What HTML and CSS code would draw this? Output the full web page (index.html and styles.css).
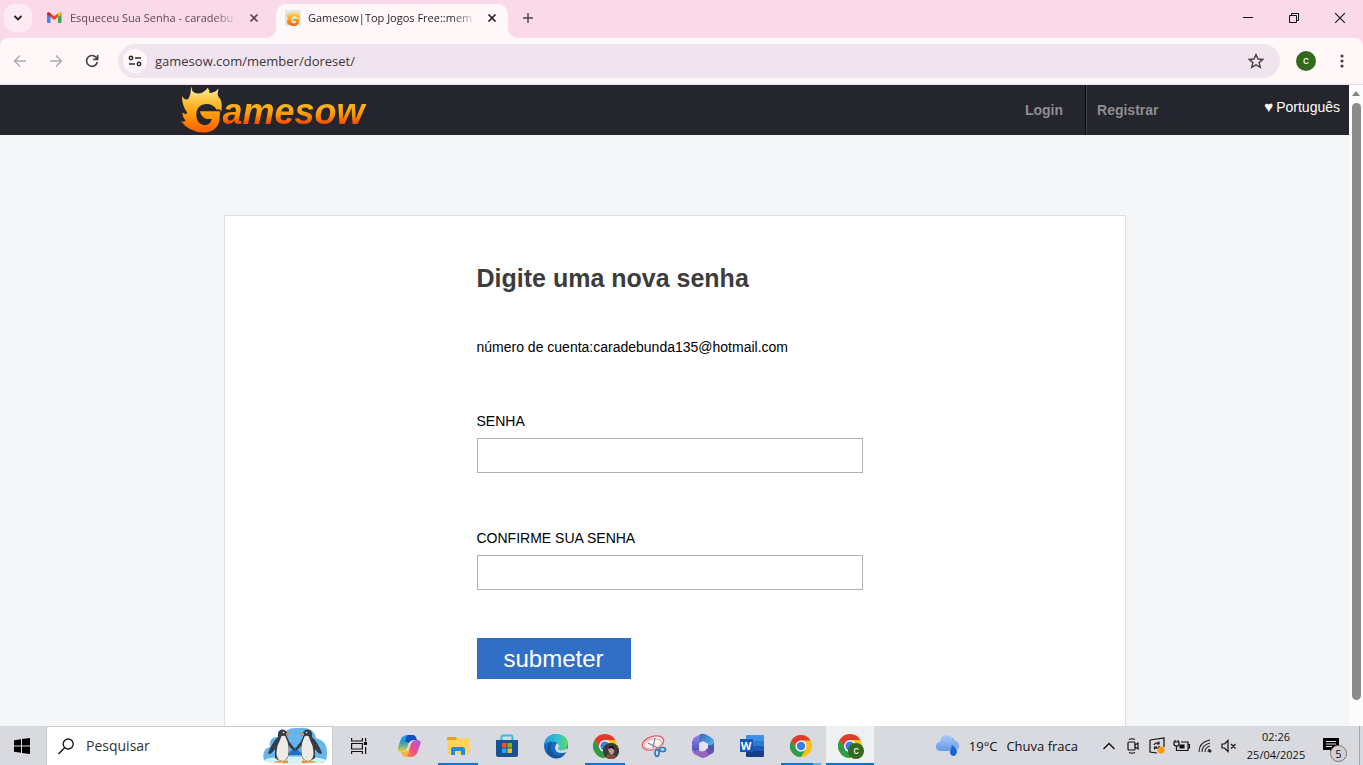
FILE: index.html
```html
<!DOCTYPE html>
<html lang="pt-BR">
<head>
<meta charset="utf-8">
<title>Gamesow|Top Jogos Free::member</title>
<link rel="stylesheet" href="styles.css">
</head>
<body>
<svg class="defs" aria-hidden="true">
  <defs>
    <linearGradient id="flame" x1="0" y1="0" x2="0" y2="1"><stop offset="0" stop-color="#fff0b0"/><stop offset=".3" stop-color="#fdc544"/><stop offset=".6" stop-color="#ff9d08"/><stop offset="1" stop-color="#ff5a00"/></linearGradient>
    <symbol id="g-flame" viewBox="30 14 130 144">
      <path fill="url(#flame)" d="M63 17L68 32Q79 43 97 37Q110 31 114 22Q121 31 118 38Q134 38 147 24Q141 42 147 50Q160 60 155 94Q150 84 141 88Q130 70 108 71Q80 74 79 102Q80 133 104 135Q122 134 126 116L110 116Q95 113 90 93L151 93L149 122Q140 157 100 157Q55 155 33 122Q43 127 47 121Q38 113 37 96Q45 105 52 98Q35 73 36 46Q43 61 55 56Q64 41 63 17Z"/>
    </symbol>
    <symbol id="chrome" viewBox="0 0 26 26">
      <circle cx="13" cy="13" r="12" fill="#fbc116"/>
      <path fill="#e23b2e" d="M2.6 7A12 12 0 0 1 23.4 7H13L8 16Z"/>
      <path fill="#2c9d4c" d="M2.6 7A12 12 0 0 0 13 25L18.2 16L13 19L8 16Z"/>
      <circle cx="13" cy="13" r="6" fill="#fff"/><circle cx="13" cy="13" r="4.6" fill="#3b7ded"/>
    </symbol>
    <symbol id="close" viewBox="0 0 10 10"><path d="M1.5 1.5l7 7m0-7l-7 7" stroke="currentColor" stroke-width="1.7"/></symbol>
  </defs>
</svg>

<header class="tabs">
  <button class="tab-search" aria-label="Pesquisar guias"><svg width="10" height="8" viewBox="0 0 10 8"><path d="M1.5 2L5 5.5L8.5 2" fill="none" stroke="#222" stroke-width="1.8"/></svg></button>
  <div class="tab">
    <svg width="16" height="16" viewBox="0 0 16 16"><path fill="#4285f4" d="M0 4h3.5v9H1q-1 0-1-1z"/><path fill="#34a853" d="M11 4h3.500v8q0 1-1 1H11z"/><path fill="#ea4335" d="M0 4Q0 1.500 3 3L7.200 6.200L11.500 3Q14.500 1.500 14.500 4L7.200 10z"/><path fill="#fbbc04" d="M11 3.300Q14.500 1.500 14.500 4.500L11 7.300z"/><path fill="#c5221f" d="M0 4Q0 2 2 2.400L3.500 3.300V7z"/></svg>
    <span class="tab-title">Esqueceu Sua Senha - caradebu</span>
    <button class="tab-close" aria-label="Fechar"><svg width="10" height="10"><use href="#close"/></svg></button>
  </div>
  <div class="tab active">
    <span class="favicon"><svg width="16" height="16"><use href="#g-flame"/></svg></span>
    <span class="tab-title">Gamesow|Top Jogos Free::mem</span>
    <button class="tab-close" aria-label="Fechar"><svg width="10" height="10"><use href="#close"/></svg></button>
  </div>
  <button class="new-tab" aria-label="Nova guia"><svg width="12" height="12" viewBox="0 0 12 12"><path d="M6 1v10M1 6h10" stroke="#54434e" stroke-width="1.500"/></svg></button>
  <div class="window-controls">
    <button aria-label="Minimizar"><svg width="10" height="10" viewBox="0 0 10 10"><path d="M0 4.500h10" stroke="#111"/></svg></button>
    <button aria-label="Restaurar"><svg width="10" height="10" viewBox="0 0 10 10"><path d="M.5 2.500h7v7h-7zM2.500 2.500v-2h7v7h-2" fill="none" stroke="#111"/></svg></button>
    <button aria-label="Fechar janela"><svg width="10" height="10" viewBox="0 0 10 10"><path d="M0 0l10 10M10 0L0 10" stroke="#111" stroke-width="1.100"/></svg></button>
  </div>
</header>

<nav class="toolbar" aria-label="Navegação">
  <div class="nav-buttons">
    <button aria-label="Voltar"><svg width="14" height="14" viewBox="0 0 14 14" fill="none" stroke="#b3a9af" stroke-width="1.500"><path d="M13 7H2M7 1.500L1.500 7L7 12.500"/></svg></button>
    <button aria-label="Avançar"><svg width="14" height="14" viewBox="0 0 14 14" fill="none" stroke="#b3a9af" stroke-width="1.500"><path d="M1 7h11M7 1.500L12.500 7L7 12.500"/></svg></button>
    <button aria-label="Recarregar"><svg width="14" height="14" viewBox="0 0 14 14" fill="none" stroke="#4c3945" stroke-width="1.600"><path d="M12.300 8A5.400 5.400 0 1 1 11 3.300L12.500 5M12.600 1v4.400H8.200"/></svg></button>
  </div>
  <div class="omnibox">
    <button class="site-info" aria-label="Informações do site"><svg width="14" height="12" viewBox="0 0 14 12" fill="none" stroke="#30272d" stroke-width="1.500"><circle cx="3" cy="3" r="1.700"/><path d="M7 3h6M1 9h6"/><circle cx="11" cy="9" r="1.700"/></svg></button>
    <input class="url" type="text" aria-label="Endereço" value="gamesow.com/member/doreset/">
    <button class="star" aria-label="Favoritos"><svg width="16" height="16" viewBox="0 0 16 16"><path d="M8 1.500L10 6l4.800.4L11.100 9.600l1.200 4.700L8 11.800l-4.300 2.500l1.200-4.700L1.200 6.400L6 6z" fill="none" stroke="#4c3d47" stroke-width="1.400"/></svg></button>
  </div>
  <button class="avatar" aria-label="Perfil">c</button>
  <button class="more" aria-label="Mais"><svg width="4" height="14" viewBox="0 0 4 14" fill="#4c3945"><circle cx="2" cy="2" r="1.600"/><circle cx="2" cy="7" r="1.600"/><circle cx="2" cy="12" r="1.600"/></svg></button>
</nav>

<div class="viewport">
  <div class="page">
    <header class="site-header">
      <div class="site-bar">
        <a class="logo" href="#" aria-label="Gamesow"><svg width="43" height="48"><use href="#g-flame"/></svg><span class="logo-text">amesow</span></a>
        <a class="site-link" href="#">Login</a>
        <a class="site-link register" href="#">Registrar</a>
      </div>
      <button class="language"><span class="heart">♥</span> Português</button>
    </header>
    <main class="card">
      <form class="reset">
        <h1>Digite uma nova senha</h1>
        <p class="account">número de cuenta:caradebunda135@hotmail.com</p>
        <div class="field"><label for="senha">SENHA</label><input id="senha" type="password"></div>
        <div class="field"><label for="confirme">CONFIRME SUA SENHA</label><input id="confirme" type="password"></div>
        <button class="submit" type="submit">submeter</button>
      </form>
    </main>
  </div>
  <div class="scrollbar"><svg width="8" height="5" viewBox="0 0 8 5"><path d="M4 0l4 5H0z" fill="#858585"/></svg><div class="thumb"></div></div>
</div>

<footer class="taskbar">
  <button class="start" aria-label="Iniciar"><svg width="16" height="16" viewBox="0 0 16 16"><path d="M0 2.200L7 1.200V7.500H0zM8 1L16 0V7.500H8zM0 8.500H7V14.800L0 13.800zM8 8.500h8V16L8 15z"/></svg></button>
  <div class="search">
    <svg width="16" height="17" viewBox="0 0 16 17" fill="none" stroke="#111" stroke-width="1.300"><circle cx="10.200" cy="6" r="5"/><path d="M6.700 9.800L.5 16"/></svg>
    <input type="text" aria-label="Pesquisar" placeholder="Pesquisar">
    <svg width="66" height="38" viewBox="0 0 66 38">
      <path d="M2 34Q-1 22 8 20Q6 8 20 10Q23 0 36 1Q52-1 54 11Q66 14 65 27Q65 35 60 36z" fill="#68b5ec"/>
      <path d="M25 28L33 20L41 28z" fill="#236fc8"/>
      <ellipse cx="33" cy="33.500" rx="31" ry="4" fill="#d8f1f4"/>
      <g id="penguin"><path d="M25.500 7Q24 2 20 2.500Q15 3 16 10Q11 14 6 26Q8 29 13 22L13 31Q19 36 25 32Q28 26 27 19Q30 23 33 24.500Q33 21 30 18Q27 15 25 10z" fill="#343b49"/><path d="M19.500 9Q24 8 24 11Q28 19 26 29Q24 34 19 34Q14 32 14.500 25Q15 18 18 13z" fill="#eeeae6"/><path d="M24 6l5 .5-5 2.500z" fill="#e9824a"/><path d="M12 35l7-2 2 2.500h-9zM21 33.500h5v2.500h-6z" fill="#e89238"/><circle cx="21.500" cy="5.500" r=".8" fill="#fff"/></g>
      <use href="#penguin" transform="translate(66 0) scale(-1 1)"/>
    </svg>
  </div>
  <button class="task-view" aria-label="Visão de tarefas"><svg width="16" height="16" viewBox="0 0 16 16" fill="none" stroke="#111" stroke-width="1.200"><path d="M.6 0V3H11.400V0M.6 5.500H11.400V11H.6zM.6 16V13.500H11.400V16M14.600 0V3.500M14.600 9V16"/><path fill="#111" d="M13.500 4.500h2v2h-2z"/></svg></button>
  <div class="apps">
    <button class="app" aria-label="Copilot"><svg width="26" height="24" viewBox="0 0 26 24">
      <defs><linearGradient id="cp1" x1="0" y1="0" x2="0" y2="1"><stop offset="0" stop-color="#15a5f1"/><stop offset=".4" stop-color="#249cc5"/><stop offset="1" stop-color="#f2ce32"/></linearGradient><linearGradient id="cp2" x1="0" y1="1" x2="1" y2="0"><stop offset="0" stop-color="#ff8a46"/><stop offset=".5" stop-color="#ee4b87"/><stop offset="1" stop-color="#a45bf1"/></linearGradient></defs>
      <path fill="url(#cp1)" d="M8 2Q9 1 11 1H17Q14 3 12 11Q11 17 6 18H4Q1 17 2 13L5 5Q6 2 8 2z"/><path fill="url(#cp2)" d="M18 22Q17 23 15 23H9Q12 21 14 13Q15 7 20 6H22Q26 7 24 11L21 19Q20 22 18 22z"/><path fill="#154ec1" d="M12 1h6Q20 2 21 6H18Q14 6 13 9L9 7Q10 2 12 1z"/><path fill="#f7b346" d="M14 23H9Q6 22 5 18H8Q12 17 13 15Q14 18 11 22z"/></svg></button>
    <button class="app running" aria-label="Explorador de Arquivos"><svg width="22" height="20" viewBox="0 0 22 20"><path fill="#e1a21c" d="M0 2Q0 1 1 1H9L11 4H0z"/><path fill="#ffd45c" d="M0 4H9L11 2H21Q22 2 22 4V17Q22 18 21 18H1Q0 18 0 17z"/><path fill="#2b8ad4" d="M4 13Q4 11 6 11H16Q18 11 18 13V19H14V15H8V19H4z"/></svg></button>
    <button class="app" aria-label="Microsoft Store"><svg width="24" height="24" viewBox="0 0 24 24"><path d="M6.500 7V3Q6.500 1.500 8 1.500H16Q17.500 1.500 17.500 3V7" fill="none" stroke="#39b9ee" stroke-width="2"/><path fill="#175393" d="M1 6H23V21Q23 23 21 23H3Q1 23 1 21z"/><path fill="#f35325" d="M7 9h4.500v4.500H7z"/><path fill="#81bc06" d="M12.500 9H17v4.500h-4.500z"/><path fill="#22a8ee" d="M7 14.500h4.500V19H7z"/><path fill="#ffba08" d="M12.500 14.500H17V19h-4.500z"/></svg></button>
    <button class="app" aria-label="Edge"><svg width="26" height="26" viewBox="0 0 26 26"><defs><linearGradient id="ed" x1="0" x2="1"><stop offset="0" stop-color="#229bdc"/><stop offset=".6" stop-color="#31c7cc"/><stop offset="1" stop-color="#66da51"/></linearGradient></defs><circle cx="13" cy="13" r="12" fill="#176ac0"/><path fill="url(#ed)" d="M1 13Q2 1 14 1Q25 2 25 11Q24 17 18 17Q14 17 15 15Q17 10 12 9Q4 7 1 13z"/><path fill="#1554a1" d="M9 10Q6 15 10 20Q15 25 22 21Q17 27 10 25Q1 21 5 13Q7 9 9 10z"/><path fill="#d9dade" d="M14 10Q18 13 15 15Q15 18 20 17L25 15L24 19Q18 21 14 19Q10 15 14 10z"/></svg></button>
    <button class="app running" aria-label="Chrome"><svg width="26" height="26"><use href="#chrome"/></svg><span class="badge photo"><svg width="16" height="16" viewBox="0 0 16 16"><circle cx="8" cy="8" r="8" fill="#3b3b3d"/><path d="M5 7Q5 3 9 4Q12 5 11 9Q10 13 7 11z" fill="#c59683"/><path d="M3 14Q4 10 7 12L12 12L13 14Q8 18 3 14z" fill="#8a493d"/><path d="M5 6Q6 2 10 3Q12 5 11 7L9 5z" fill="#171717"/></svg></span></button>
    <button class="app" aria-label="Ferramenta de Captura"><svg width="26" height="24" viewBox="0 0 26 24"><ellipse cx="12" cy="9" rx="11" ry="6.500" transform="rotate(-18 12 9)" fill="#f8f2f3" stroke="#e35b61" stroke-width="1.300"/><ellipse cx="12" cy="10" rx="9" ry="5" transform="rotate(-12 12 10)" fill="none" stroke="#eba3a6"/><path d="M14 4L12 14M7 9L17 14" stroke="#7e828c" stroke-width="1.200"/><g fill="none" stroke="#287fbd" stroke-width="1.700"><ellipse cx="16" cy="19" rx="2" ry="3.300"/><ellipse cx="21.500" cy="15.500" rx="3" ry="2"/></g></svg></button>
    <button class="app" aria-label="Microsoft 365"><svg width="24" height="26" viewBox="0 0 24 26"><defs><linearGradient id="m3" x1="0" y1="0" x2="0" y2="1"><stop offset="0" stop-color="#9a83ea"/><stop offset="1" stop-color="#4a55ba"/></linearGradient><linearGradient id="m4" x1="0" y1="0" x2="1" y2="1"><stop offset="0" stop-color="#3b64b5"/><stop offset="1" stop-color="#4fc6f6"/></linearGradient></defs><path fill="url(#m3)" d="M10 1L14 2Q8 6 8 12V17Q5 20 1 17V9Q1 6 4 4z"/><path fill="url(#m4)" d="M9 1.500Q12 0 15 1.500L21 5Q23 6 23 9V15Q20 16 17 12Q15 8 8 10Q8 5 9 1.500z"/><path fill="#5653b5" d="M23 9V17Q23 20 20 21L15 24L12 19Q16 17 17 12Q22 13 23 9z"/><path fill="#9367bd" d="M1 16Q3 19 7 17Q12 20 15 17L18 22L14 24.500Q12 25.500 9 24L3 21Q1 19 1 16z"/><path fill="#e4e4ec" d="M8 10.500L12 8L17 11V15L13 18L8 15z"/></svg></button>
    <button class="app" aria-label="Word"><span class="word"><svg width="18" height="22" viewBox="0 0 18 22"><path fill="#3c91e6" d="M0 1Q0 0 1 0H17Q18 0 18 1V6H0z"/><path fill="#2b7cd3" d="M0 6H18V11H0z"/><path fill="#185abd" d="M0 11H18V16H0z"/><path fill="#123f87" d="M0 16H18V21Q18 22 17 22H1Q0 22 0 21z"/></svg><span class="word-letter">W</span></span></button>
    <button class="app running stacked" aria-label="Chrome"><svg width="24" height="24"><use href="#chrome"/></svg></button>
    <button class="app running current" aria-label="Chrome"><svg width="26" height="26"><use href="#chrome"/></svg><span class="badge">c</span></button>
  </div>
  <button class="weather"><svg width="25" height="23" viewBox="0 0 25 23"><defs><linearGradient id="cl" x1="0" y1="0" x2="0" y2="1"><stop offset="0" stop-color="#a8c9fa"/><stop offset="1" stop-color="#659ae9"/></linearGradient></defs><path fill="#85aeeb" d="M12 5Q18 1 20 7Q25 8 24 13Q23 17 19 16H8z"/><path fill="url(#cl)" d="M5 17Q0 16 1 11Q2 8 5 8Q6 1 12 1Q18 2 18 8Q23 11 19 16Q17 17 14 17z"/><path fill="#1763d8" d="M17 11Q22 15 22 18Q21 22 18 22Q15 21 15 18z"/></svg><span>19°C</span><span>Chuva fraca</span></button>
  <div class="tray">
    <button aria-label="Mostrar ícones ocultos"><svg width="12" height="8" viewBox="0 0 12 8"><path d="M.5 7L6 1.500L11.500 7" fill="none" stroke="#111" stroke-width="1.400"/></svg></button>
    <button aria-label="Câmera"><svg width="12" height="16" viewBox="0 0 12 16" fill="none" stroke="#111" stroke-width="1.200"><rect x="1" y="4" width="7" height="8" rx="1"/><path d="M8 7l3-2v6L8 9M2 1.500Q5 0 8 1.500M2 14.500Q5 16 8 14.500"/></svg></button>
    <button aria-label="Atualização"><svg width="18" height="18" viewBox="0 0 18 18" fill="none" stroke="#111" stroke-width="1.200"><path d="M2 3L16 1V10M2 3V15L9 16M6 8Q7 5 10.500 6L11 7M11 4.500V7H8.500M11.500 9Q10.500 12 7.500 11L6.500 10M6.500 12.500V10H9"/><circle cx="13" cy="13" r="3.500" fill="#ff980a" stroke="none"/></svg></button>
    <button aria-label="Bateria"><svg width="17" height="13" viewBox="0 0 17 13" fill="none" stroke="#111" stroke-width="1.200"><path d="M2 1V3M5 1V3M1 3H6V5Q6 7 3.500 7Q1 7 1 5zM3.500 7V11.500H15V3H8M15 5.500H16.500V9H15"/><path fill="#111" d="M7 6h4v3H7z"/></svg></button>
    <button aria-label="Rede"><svg width="14" height="14" viewBox="0 0 14 14" fill="none" stroke="#222" stroke-width="1.100"><path d="M1 13Q1 3 12 1M4 13Q4 6 12 4M7 13Q7 8.500 12 7M10 13Q10 10.500 12 10"/><circle cx="12" cy="12" r="1" fill="#222"/></svg></button>
    <button aria-label="Som desativado"><svg width="16" height="14" viewBox="0 0 16 14" fill="none" stroke="#111" stroke-width="1.200"><path d="M1 5H3.500L7 1.500V12.500L3.500 9H1zM10 5l4.500 4.500M14.500 5L10 9.500"/></svg></button>
  </div>
  <button class="clock"><span>02:26</span><span>25/04/2025</span></button>
  <button class="notices" aria-label="Notificações"><svg width="17" height="16" viewBox="0 0 17 16"><path d="M0 0H16V12H11L9 15L7 12H0z"/><path d="M3 3.500H13M3 6H13M3 8.500H9" stroke="#dcdde0"/></svg><span class="count">5</span></button>
  <div class="desktop-edge"></div>
</footer>
</body>
</html>
```
FILE: styles.css
```css
* { box-sizing: border-box; }
body { margin: 0; height: 100vh; display: flex; flex-direction: column; overflow: hidden; font-family: "Liberation Sans", Arial, sans-serif; font-size: 14px; color: #000; background: #fadae9; }
button { border: 0; padding: 0; margin: 0; background: none; color: inherit; font: inherit; display: flex; align-items: center; justify-content: center; }
svg { display: block; flex: none; }
a { text-decoration: none; }
.defs { position: absolute; width: 0; height: 0; }

.tabs { flex: none; height: 38px; display: flex; align-items: flex-start; padding: 4px 0 0 4px; font: 11px "Open Sans", "Noto Sans", sans-serif; }
.tab-search { width: 28px; height: 28px; border-radius: 10px; background: #fdebf4; margin-right: 6px; }
.tab { position: relative; width: 232px; height: 34px; display: flex; align-items: center; padding: 0 7px 6px 9px; color: #5d4655; }
.tab + .tab { margin-left: 6px; }
.tab.active { background: #fff7f8; border-radius: 10px 10px 0 0; color: #271c23; }
.tab.active::before, .tab.active::after { content: ""; position: absolute; bottom: 0; width: 10px; height: 10px; }
.tab.active::before { right: 100%; background: radial-gradient(circle at 0 0, transparent 10px, #fff7f8 10px); }
.tab.active::after { left: 100%; background: radial-gradient(circle at 100% 0, transparent 10px, #fff7f8 10px); }
.favicon { background: #dce7f0; }
.tab-title { flex: 1; margin: 0 6px 0 7px; overflow: hidden; white-space: nowrap; line-height: 18px; -webkit-mask-image: linear-gradient(90deg, #000 85%, transparent); mask-image: linear-gradient(90deg, #000 85%, transparent); }
.tab-close { width: 18px; height: 18px; flex: none; }
.new-tab { width: 28px; height: 28px; margin-left: 6px; }
.window-controls { display: flex; margin-left: auto; }
.window-controls button { width: 46px; height: 28px; }

.toolbar { flex: none; height: 47px; display: flex; align-items: center; padding: 0 11px 0 6px; background: #fff7f8; border-bottom: 1px solid #f0d9e5; border-radius: 8px 8px 0 0; }
.nav-buttons { display: flex; gap: 8px; margin-right: 12px; }
.nav-buttons button { width: 28px; height: 28px; }
.omnibox { flex: 1; height: 34px; display: flex; align-items: center; padding: 0 10px 0 5px; border-radius: 17px; background: #f0e5ee; }
.site-info { width: 24px; height: 24px; border-radius: 50%; background: #fff7f8; }
.url { flex: 1; min-width: 0; border: 0; padding: 0; margin-left: 8px; background: none; color: #41343d; font: 13px/20px "Open Sans", "Noto Sans", sans-serif; outline: 0; }
.star { width: 28px; height: 28px; }
.avatar { width: 20px; height: 20px; margin: 0 16px; border-radius: 50%; background: #33691e; color: #fff; font: 11px/16px Roboto, sans-serif; }
.more { width: 20px; height: 28px; }

.viewport { flex: 1; min-height: 0; display: flex; }
.page { flex: 1; min-width: 0; display: flex; flex-direction: column; align-items: center; background: #f5f6f8; overflow: hidden; }
.site-header { width: 100%; height: 50px; flex: none; display: grid; grid-template-columns: 1fr minmax(0, 990px) 1fr; background: #24252d; color: #fff; }
.site-bar { grid-column: 2; display: flex; }
.logo { display: flex; align-items: flex-start; margin-right: auto; }
.logo-text { padding: 6px 4px 0 0; font: italic bold 36px/42px "Liberation Sans", Arial, sans-serif; color: transparent; background: linear-gradient(#ffc526 30%, #ff9a08 60%, #f53b00 85%); -webkit-background-clip: text; background-clip: text; }
.site-link { padding: 0 23px; color: #8e8e90; font-weight: bold; line-height: 50px; }
.site-link.register { padding: 0 11px 0 10px; border-left: 1px solid #44454b; box-shadow: -1px 0 0 #0a0a0c; }
.language { justify-self: end; align-self: start; gap: 3px; padding-right: 9px; line-height: 16px; margin-top: 14px; color: #fff; white-space: nowrap; }
.heart { font-size: 15px; }
.card { width: calc(100% - 48px); max-width: 902px; flex: 1 0 600px; margin-top: 80px; padding: 44px 0 0 252px; background: #fff; border: 1px solid #dedfe1; }
.reset { width: 386px; max-width: calc(100% - 20px); }
h1 { margin: 0; font-size: 25px; line-height: 36px; color: #3c3c3c; }
.account { margin: 42px 0 56px; line-height: 18px; }
.field { margin-bottom: 56px; }
.field label { display: block; line-height: 18px; margin-bottom: 8px; }
.field input { display: block; width: 100%; height: 35px; border: 1px solid #b1b1b1; background: #fff; }
.submit { width: 154px; height: 41px; margin-top: -8px; background: #316fc6; color: #fff; font-size: 24px; line-height: 28px; }
.scrollbar { width: 14px; display: flex; flex-direction: column; align-items: center; gap: 7px; padding: 6px 0 26px; background: #fcfcfc; }
.thumb { flex: 1; width: 9px; border-radius: 5px; background: #8b8b8b; }

.taskbar { flex: none; height: 39px; display: flex; background: #d9dadf; color: #111; font: 14px/20px "Open Sans", "Noto Sans", sans-serif; }
.start { width: 46px; }
.start svg { margin-left: -2px; }
.search { width: 287px; display: flex; align-items: center; padding: 0 4px 0 11px; background: #fff; border: 1px solid #c8c9cb; border-bottom: 0; }
.search input { flex: 1; min-width: 0; margin-left: 12px; padding: 0; border: 0; background: none; font: 14px/20px "Open Sans", "Noto Sans", sans-serif; outline: 0; }
.search input::placeholder { color: #333; opacity: 1; }
.task-view { width: 51px; }
.apps { display: flex; }
.app { position: relative; width: 49px; }
.running::after { content: ""; position: absolute; left: 5px; right: 4px; bottom: 0; height: 2px; background: #0078d4; }
.stacked::after { background: linear-gradient(90deg, #0078d4 32px, #69afe6 32px); }
.current { background: linear-gradient(90deg, transparent 1px, #eff0f2 1px); }
.current::after { left: 1px; right: 0; }
.badge { position: absolute; left: 23px; top: 17px; width: 16px; height: 16px; border-radius: 50%; background: #35691e; color: #fff; font: 10px/15px Roboto, sans-serif; text-align: center; }
.word { display: grid; grid-template-columns: 6px 18px; align-items: center; }
.word svg { grid-column: 2; grid-row: 1; }
.word-letter { grid-column: 1; grid-row: 1; z-index: 1; width: 13px; height: 13px; background: #1956b6; color: #fff; font: bold 11px/13px "Open Sans", sans-serif; text-align: center; }
.weather { margin-left: auto; margin-right: 19px; gap: 9px; white-space: nowrap; font-size: 13px; }
.tray { display: flex; }
.tray button { width: 24px; }
.clock { width: 70px; flex-direction: column; font-size: 11px; line-height: 18px; }
.notices { position: relative; width: 48px; padding-right: 8px; }
.count { position: absolute; left: 19px; top: 19px; width: 17px; height: 17px; border: 1px solid #777; border-radius: 50%; background: #d0d1d3; font-size: 11px; line-height: 15px; text-align: center; }
.desktop-edge { width: 4px; border-left: 1px solid #a9aaac; }
```
